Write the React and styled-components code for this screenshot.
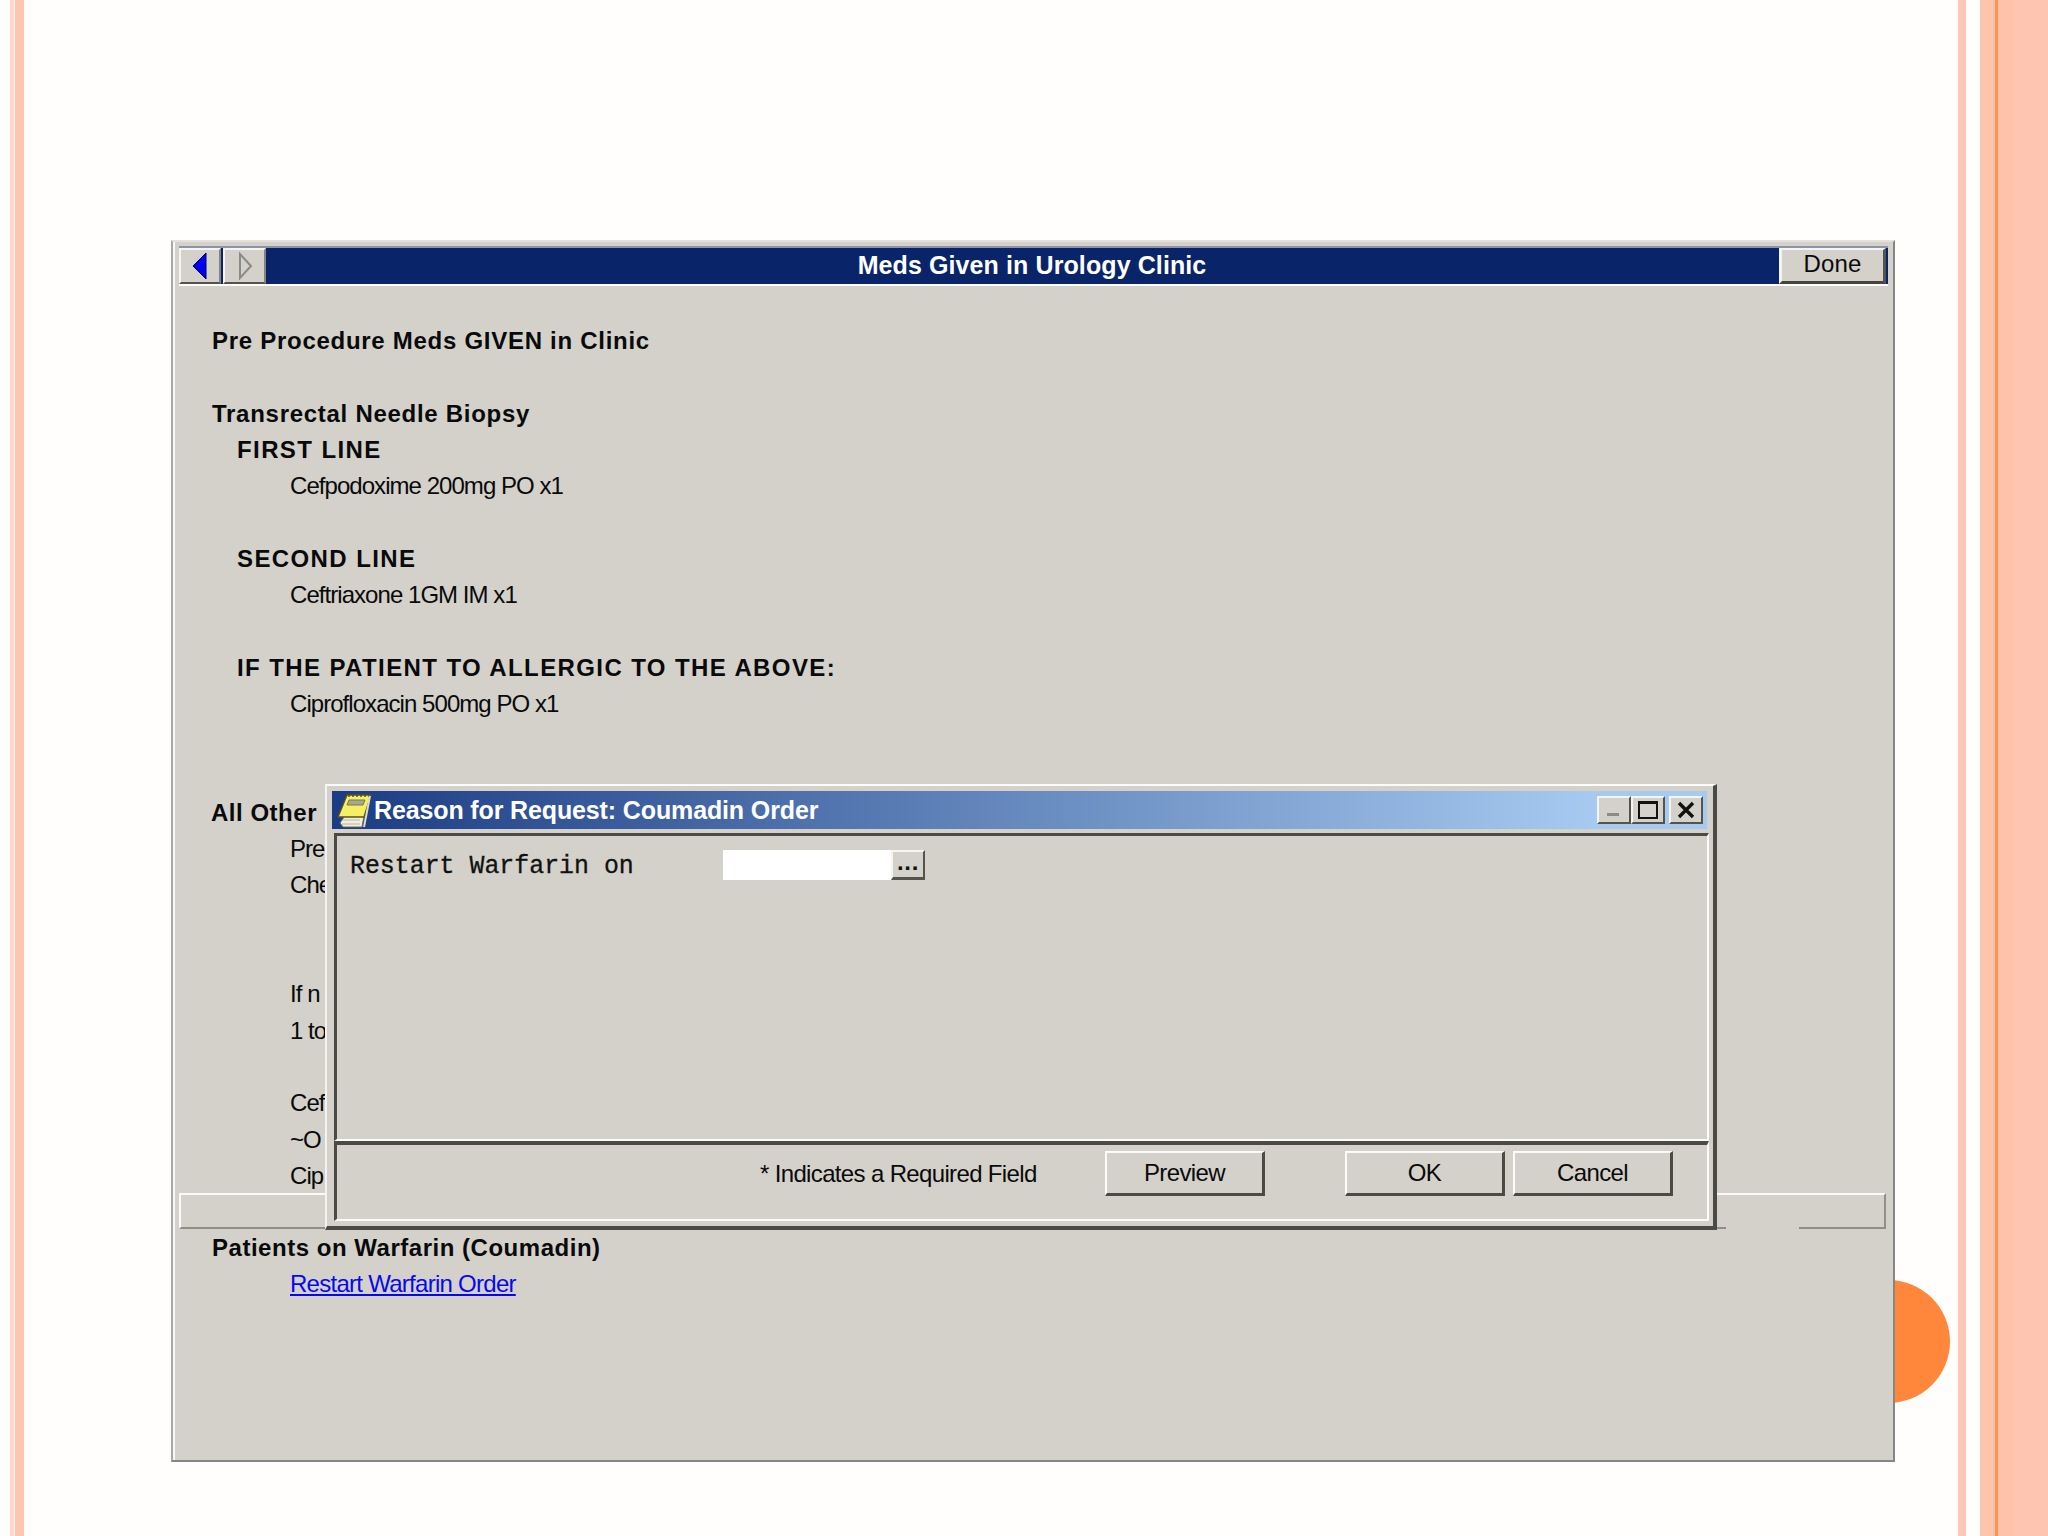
import React from 'react'
import styled, { createGlobalStyle } from 'styled-components'

const Global = createGlobalStyle`
  html, body { margin: 0; padding: 0; background: #fffefd; }
  body { font-family: "Liberation Sans", Arial, sans-serif; color: #0a0a0a; }
`

const Page = styled.div`
  position: relative;
  display: flex;
  width: 2048px;
  height: 1536px;
  overflow: hidden;
  background: #fffefd;
`

const Strip = styled.div`
  flex: none;
  width: ${p => p.$w}px;
  background: ${p => p.$c};
`

const Stage = styled.main`
  flex: 1;
  padding: 240px 0 0 147px;
`

const Dot = styled.div`
  position: absolute;
  left: 1827px;
  top: 1280px;
  width: 123px;
  height: 123px;
  border-radius: 50%;
  background: #fe873b;
`

const Window = styled.section`
  position: relative;
  z-index: 1;
  box-sizing: border-box;
  width: 1724px;
  height: 1222px;
  padding: 4px 5px 0 6px;
  background: #d3d1ca;
  border-top: 2px solid #e6e0da;
  border-left: 2px solid #a8a8a4;
  border-right: 2px solid #868682;
  border-bottom: 2px solid #868682;
  box-shadow: inset 2px 0 0 #f7f7f5;
`

const TitleBar = styled.header`
  display: flex;
  align-items: stretch;
  height: 36px;
  border-top: 2px solid #8a93a8;
  border-bottom: 2px solid #fcfcfb;
  background: #0a246a;
`

const NavButton = styled.button`
  box-sizing: border-box;
  flex: none;
  width: ${p => p.$w}px;
  margin-right: ${p => p.$gap}px;
  padding: 0;
  display: flex;
  align-items: center;
  justify-content: center;
  background: #d3d1ca;
  border: 0;
  border-top: 2px solid #f4f4f2;
  border-left: 2px solid #f4f4f2;
  border-bottom: 2px solid #55534e;
  border-right: 2px solid #86847e;
`

const BarTitle = styled.h1`
  flex: 1;
  margin: 0;
  padding-left: 19px;
  text-align: center;
  color: #fff;
  font-size: 25px;
  font-weight: 700;
  letter-spacing: 0.1px;
  line-height: 34px;
`

const DoneButton = styled.button`
  box-sizing: border-box;
  flex: none;
  width: 107px;
  margin-right: 2px;
  padding: 0 0 4px;
  background: #d3d1ca;
  border: 0;
  border-top: 2px solid #f4f4f2;
  border-left: 3px solid #f4f4f2;
  border-bottom: 3px solid #46443f;
  border-right: 3px solid #55534e;
  font: 24px "Liberation Sans", Arial, sans-serif;
  letter-spacing: 0.1px;
  color: #0a0a0a;
`

const Content = styled.div`
  padding-top: 37px;
`

const spacing = { body: '-0.95px', bold: '0.72px', tight: '0.52px', caps: '1.4px' }

const Line = styled.div`
  height: 36.3px;
  padding-left: ${p => p.$indent}px;
  line-height: 36.3px;
  font-size: 24px;
  font-weight: ${p => (p.$kind ? 700 : 400)};
  letter-spacing: ${p => spacing[p.$kind || 'body']};
  white-space: nowrap;
`

const OrderLink = styled.a`
  color: #0808f0;
  letter-spacing: -0.73px;
  text-decoration: underline;
`

const StatusFrame = styled.div`
  position: relative;
  box-sizing: border-box;
  height: 36px;
  margin: -1px 2px 1px 0;
  border-top: 2px solid #fafaf8;
  border-left: 2px solid #fafaf8;
  border-right: 2px solid #8f8e89;
  border-bottom: 2px solid #8f8e89;
  &::after {
    content: '';
    position: absolute;
    right: 85px;
    bottom: -2px;
    width: 73px;
    height: 2px;
    background: #d3d1ca;
  }
`

const Dialog = styled.section`
  position: absolute;
  left: 152px;
  top: 542px;
  box-sizing: border-box;
  width: 1392px;
  height: 446px;
  z-index: 2;
  padding: 5px 4px 4px 5px;
  background: #d3d1ca;
  border-top: 2px solid #fbfbfa;
  border-left: 2px solid #f4f3f0;
  border-right: 4px solid #4c4a45;
  border-bottom: 4px solid #4c4a45;
`

const DialogTitle = styled.header`
  display: flex;
  align-items: center;
  height: 38px;
  margin-right: 2px;
  padding: 0 4px 0 4px;
  background: linear-gradient(90deg, #1b3c84 0%, #a6caf0 92%);
`

const DialogIcon = styled.svg`
  flex: none;
  width: 36px;
  height: 36px;
`

const DialogHeading = styled.h2`
  flex: 1;
  margin: 0 0 0 2px;
  color: #fff;
  font-size: 25px;
  font-weight: 700;
  letter-spacing: -0.13px;
  line-height: 38px;
`

const CaptionButton = styled.button`
  box-sizing: border-box;
  flex: none;
  width: ${p => p.$w || 34}px;
  height: 28px;
  margin-left: ${p => p.$gap || 0}px;
  padding: 0;
  display: flex;
  align-items: center;
  justify-content: center;
  background: #d3d1ca;
  border: 0;
  border-top: 2px solid #f4f4f2;
  border-left: 2px solid #f4f4f2;
  border-bottom: 2px solid #55534e;
  border-right: 2px solid #55534e;
`

const UpperPane = styled.div`
  box-sizing: border-box;
  display: flex;
  align-items: center;
  align-content: flex-start;
  flex-wrap: wrap;
  height: 308px;
  margin: 4px 0 0 2px;
  padding: 12px 0 0 13px;
  border-top: 3px solid #4c4a45;
  border-left: 3px solid #4c4a45;
  border-right: 2px solid #fbfbfa;
  border-bottom: 2px solid #fbfbfa;
`

const MonoLabel = styled.label`
  width: 373px;
  padding-top: 3px;
  font-family: "Liberation Mono", "Courier New", monospace;
  font-size: 24.9px;
  font-weight: 400;
  line-height: 30px;
  color: #111;
  -webkit-text-stroke: 0.3px #111;
`

const DateInput = styled.div`
  width: 168px;
  height: 30px;
  background: #fff;
`

const PickerButton = styled.button`
  box-sizing: border-box;
  width: 34px;
  height: 30px;
  padding: 0 0 8px;
  background: #d3d1ca;
  border: 0;
  border-top: 2px solid #f4f4f2;
  border-left: 2px solid #f4f4f2;
  border-bottom: 3px solid #55534e;
  border-right: 2px solid #55534e;
  font: 700 24px "Liberation Sans", Arial, sans-serif;
  letter-spacing: 0.6px;
  line-height: 20px;
  color: #111;
`

const LowerPane = styled.div`
  box-sizing: border-box;
  display: flex;
  align-items: flex-start;
  height: 80px;
  margin-left: 2px;
  padding: 6px 0 0 423px;
  border-top: 4px solid #4c4a45;
  border-left: 3px solid #4c4a45;
  border-right: 2px solid #fbfbfa;
  border-bottom: 2px solid #fbfbfa;
`

const RequiredNote = styled.span`
  width: 345px;
  font-size: 24px;
  letter-spacing: -0.65px;
  line-height: 46px;
  white-space: nowrap;
`

const DialogButton = styled.button`
  box-sizing: border-box;
  flex: none;
  width: 160px;
  height: 45px;
  margin-left: ${p => p.$gap || 0}px;
  padding: 0;
  background: #d3d1ca;
  border: 0;
  border-top: 2px solid #fbfbfa;
  border-left: 2px solid #fbfbfa;
  border-bottom: 3px solid #4c4a45;
  border-right: 3px solid #4c4a45;
  font: 24px "Liberation Sans", Arial, sans-serif;
  letter-spacing: -0.6px;
  color: #0a0a0a;
`

const lines = [
  { text: 'Pre Procedure Meds GIVEN in Clinic', indent: 33, kind: 'bold' },
  {},
  { text: 'Transrectal Needle Biopsy', indent: 33, kind: 'bold' },
  { text: 'FIRST LINE', indent: 58, kind: 'caps' },
  { text: 'Cefpodoxime 200mg PO x1', indent: 111 },
  {},
  { text: 'SECOND LINE', indent: 58, kind: 'caps' },
  { text: 'Ceftriaxone 1GM IM x1', indent: 111 },
  {},
  { text: 'IF THE PATIENT TO ALLERGIC TO THE ABOVE:', indent: 58, kind: 'caps' },
  { text: 'Ciprofloxacin 500mg PO x1', indent: 111 },
  {},
  {},
  { text: 'All Other', indent: 32, kind: 'tight' },
  { text: 'Pre', indent: 111 },
  { text: 'Che', indent: 111 },
  {},
  {},
  { text: 'If n', indent: 111 },
  { text: '1 to', indent: 111 },
  {},
  { text: 'Cef', indent: 111 },
  { text: '~O', indent: 111 },
  { text: 'Cip', indent: 111 },
]

function NotepadIcon() {
  return (
    <DialogIcon viewBox="0 0 36 36">
      <path d="M10 22 L4 31 L7 35 L26 35 L28 24 Z" fill="#f1efdf" stroke="#6d6b4a" strokeWidth="1" />
      <path d="M8 24 L24 24 M7 28 L24 28 M6 32 L24 32" stroke="#b7b59c" strokeWidth="1" />
      <path d="M11 3 L35 3 L28 25 L2 25 Z" fill="#f6ee63" stroke="#55502a" strokeWidth="1.4" />
      <path d="M13 8 L29 8 L27 13 L11 13 Z" fill="#a9a88a" stroke="#77765a" strokeWidth="1" />
      <path d="M13 2 L13 5 M17 2 L17 5 M21 2 L21 5 M25 2 L25 5 M29 2 L29 5 M33 2 L33 5" stroke="#4d4a2c" strokeWidth="1.4" />
      <path d="M34 4 L28 35" stroke="#dcdcc8" strokeWidth="2" />
    </DialogIcon>
  )
}

export default function App() {
  return (
    <Page>
      <Global />
      <Strip $w={10} $c="#fffefd" />
      <Strip $w={4} $c="#fdd8cb" />
      <Strip $w={1} $c="#fff4ef" />
      <Strip $w={9} $c="#fec5b0" />
      <Stage>
        <Window>
          <TitleBar>
            <NavButton $w={42} $gap={2}>
              <svg width="18" height="30" viewBox="0 0 18 30"><path d="M15 2 L15 28 L2 15 Z" fill="#0000f0" stroke="#000060" strokeWidth="1" /></svg>
            </NavButton>
            <NavButton $w={43} $gap={0}>
              <svg width="18" height="30" viewBox="0 0 18 30"><path d="M4 3 L4 27 L15 15 Z" fill="none" stroke="#8a8a86" strokeWidth="2" /></svg>
            </NavButton>
            <BarTitle>Meds Given in Urology Clinic</BarTitle>
            <DoneButton>Done</DoneButton>
          </TitleBar>
          <Content>
            {lines.map((l, i) => (
              <Line key={i} $indent={l.indent} $kind={l.kind}>{l.text}</Line>
            ))}
            <StatusFrame />
            <Line $indent={33} $kind="tight">Patients on Warfarin (Coumadin)</Line>
            <Line $indent={111}><OrderLink href="#">Restart Warfarin Order</OrderLink></Line>
          </Content>
          <Dialog>
            <DialogTitle>
              <NotepadIcon />
              <DialogHeading>Reason for Request: Coumadin Order</DialogHeading>
              <CaptionButton>
                <svg width="18" height="16" viewBox="0 0 18 16"><rect x="2" y="11" width="12" height="3" fill="#8a8a86" /></svg>
              </CaptionButton>
              <CaptionButton>
                <svg width="22" height="20" viewBox="0 0 22 20"><rect x="2" y="2" width="18" height="16" fill="none" stroke="#111" strokeWidth="2" /><rect x="2" y="1" width="18" height="3" fill="#111" /></svg>
              </CaptionButton>
              <CaptionButton $gap={4}>
                <svg width="20" height="18" viewBox="0 0 20 18"><path d="M3 2 L17 16 M17 2 L3 16" stroke="#111" strokeWidth="3.4" /></svg>
              </CaptionButton>
            </DialogTitle>
            <UpperPane>
              <MonoLabel>Restart Warfarin on</MonoLabel>
              <DateInput />
              <PickerButton>...</PickerButton>
            </UpperPane>
            <LowerPane>
              <RequiredNote>* Indicates a Required Field</RequiredNote>
              <DialogButton>Preview</DialogButton>
              <DialogButton $gap={80}>OK</DialogButton>
              <DialogButton $gap={8}>Cancel</DialogButton>
            </LowerPane>
          </Dialog>
        </Window>
      </Stage>
      <Dot />
      <Strip $w={8} $c="#fdc8b6" />
      <Strip $w={14} $c="#fffefd" />
      <Strip $w={15} $c="#fdc5ae" />
      <Strip $w={3} $c="#fe9252" />
      <Strip $w={15} $c="#fec2aa" />
      <Strip $w={35} $c="#fec6b0" />
    </Page>
  )
}
